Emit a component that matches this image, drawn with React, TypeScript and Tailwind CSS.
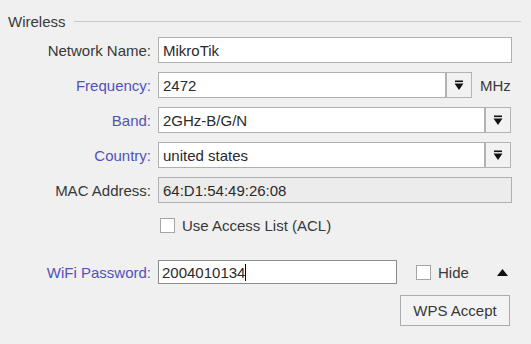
import React from "react";

function Arrow() {
  return (
    <svg width="10" height="11" viewBox="0 0 10 11">
      <rect x="1" y="0.5" width="8" height="1.6" fill="#111" />
      <polygon points="0.5,3.5 9.5,3.5 5,10" fill="#111" />
    </svg>
  );
}

function DropButton() {
  return (
    <div className="w-[26px] h-[26px] border border-[#b4b4b4] bg-[#f2f2f2] flex items-center justify-center">
      <Arrow />
    </div>
  );
}

function Label({ text, blue }: { text: string; blue?: boolean }) {
  return (
    <div
      className={
        "w-[152px] text-right pr-[1px] whitespace-nowrap " +
        (blue ? "text-[#5252b8]" : "text-[#383838]")
      }
    >
      {text}
    </div>
  );
}

function Input({ value, w, gray }: { value: string; w: string; gray?: boolean }) {
  return (
    <div
      className={
        "h-[26px] border border-[#b0b0b0] flex items-center pl-[4px] text-[#2a2a2a] whitespace-nowrap " +
        w +
        (gray ? " bg-[#ececec]" : " bg-white")
      }
    >
      {value}
    </div>
  );
}

export default function App() {
  return (
    <div className="w-[531px] h-[344px] bg-[#f0f0f0] overflow-hidden font-['Liberation_Sans',Arial,sans-serif] text-[15px] leading-none">
      <div className="pt-[12px] h-[30px] flex items-center">
        <span className="ml-[8px] text-[#3a3a3a]">Wireless</span>
        <div className="ml-[8px] w-[447px] h-px bg-[#c8c8c8]" />
      </div>
      <div className="mt-[7px] flex flex-col gap-[9px]">
        <div className="flex items-center h-[26px]">
          <Label text="Network Name:" />
          <div className="ml-[6px]">
            <Input value="MikroTik" w="w-[354px]" />
          </div>
        </div>
        <div className="flex items-center h-[26px]">
          <Label text="Frequency:" blue />
          <div className="ml-[6px] flex items-center">
            <Input value="2472" w="w-[288px]" />
            <DropButton />
            <span className="ml-[8px] text-[#3a3a3a]">MHz</span>
          </div>
        </div>
        <div className="flex items-center h-[26px]">
          <Label text="Band:" blue />
          <div className="ml-[6px] flex items-center">
            <Input value="2GHz-B/G/N" w="w-[327px]" />
            <DropButton />
          </div>
        </div>
        <div className="flex items-center h-[26px]">
          <Label text="Country:" blue />
          <div className="ml-[6px] flex items-center">
            <Input value="united states" w="w-[327px]" />
            <DropButton />
          </div>
        </div>
        <div className="flex items-center h-[26px]">
          <Label text="MAC Address:" />
          <div className="ml-[6px]">
            <Input value="64:D1:54:49:26:08" w="w-[354px]" gray />
          </div>
        </div>
        <div className="flex items-center h-[26px]">
          <div className="ml-[160px] w-[15px] h-[15px] bg-white border border-[#a4a4a4]" />
          <span className="ml-[7px] text-[#383838]">Use Access List (ACL)</span>
        </div>
      </div>
      <div className="mt-[22px] flex items-center h-[24px]">
        <Label text="WiFi Password:" blue />
        <div className="ml-[6px] w-[239px] h-[24px] border border-[#8c8c8c] bg-white flex items-center pl-[3px] text-[#2a2a2a]">
          <span>2004010134</span>
          <span className="w-px h-[17px] bg-black" />
        </div>
        <div className="ml-[19px] w-[15px] h-[15px] bg-white border border-[#a4a4a4]" />
        <span className="ml-[7px] text-[#383838]">Hide</span>
        <svg className="ml-[28px]" width="11" height="7" viewBox="0 0 11 7">
          <polygon points="5.5,0 11,7 0,7" fill="#111" />
        </svg>
      </div>
      <div className="mt-[11px] flex justify-end pr-[21px]">
        <div className="w-[110px] h-[31px] border border-[#acacac] bg-[#f3f3f3] flex items-center justify-center text-[#383838]">
          WPS Accept
        </div>
      </div>
    </div>
  );
}
